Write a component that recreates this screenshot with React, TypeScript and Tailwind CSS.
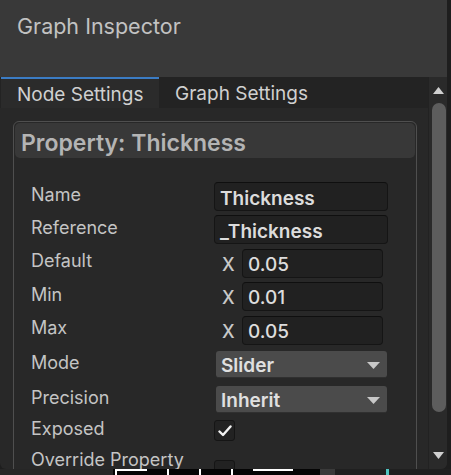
import React from "react";

const font = { fontFamily: "Inter, 'Noto Sans', sans-serif" };

function Label({ children }: { children: React.ReactNode }) {
  return (
    <div className="w-[199px] shrink-0 pl-[16px] pb-[4px] text-[18px] leading-none text-[#c4c4c4]">
      {children}
    </div>
  );
}

function TextField({ value }: { value: string }) {
  return (
    <div className="w-[174px] h-[29px] rounded-[4px] bg-[#212121] border border-[#151515] border-t-[#0f0f0f] flex items-center pl-[5px] pt-[3px] text-[19px] font-semibold leading-none text-[#dcdcdc]">
      {value}
    </div>
  );
}

function NumField({ value }: { value: string }) {
  return (
    <div className="flex items-center">
      <div className="w-[28px] pl-[8px] pt-[3px] text-[18px] font-medium leading-none text-[#c8c8c8]">X</div>
      <div className="w-[141px] h-[29px] rounded-[4px] bg-[#212121] border border-[#151515] border-t-[#0f0f0f] flex items-center pl-[5px] pt-[2px] text-[19px] font-medium leading-none text-[#dcdcdc]">
        {value}
      </div>
    </div>
  );
}

function Dropdown({ value }: { value: string }) {
  return (
    <div className="ml-[2px] w-[171px] h-[27px] rounded-[3px] bg-[#4b4b4b] border-b border-[#303030] flex items-center justify-between pl-[5px] pr-[7px] pt-[2px] text-[19px] font-semibold leading-none text-[#e0e0e0]">
      <span>{value}</span>
      <svg width="13" height="7" viewBox="0 0 13 7">
        <path d="M0 0 H13 L6.5 7 Z" fill="#c8c8c8" />
      </svg>
    </div>
  );
}

function Checkbox({ checked }: { checked?: boolean }) {
  return (
    <div className="w-[21px] h-[21px] rounded-[3px] bg-[#222222] border border-[#151515] flex items-center justify-center">
      {checked && (
        <svg width="14" height="12" viewBox="0 0 14 12">
          <path d="M1.5 6.5 L5 10 L12.5 1.5" stroke="#f2f2f2" strokeWidth="2.4" fill="none" strokeLinecap="round" strokeLinejoin="round" />
        </svg>
      )}
    </div>
  );
}

function Row({ h, label, children }: { h: string; label: string; children: React.ReactNode }) {
  return (
    <div className={`flex items-center ${h}`}>
      <Label>{label}</Label>
      {children}
    </div>
  );
}

export default function App() {
  return (
    <div className="w-[451px] h-[475px] bg-[#1e1e1e] overflow-hidden flex flex-col" style={font}>
      <div className="w-[447px] h-[469px] shrink-0 bg-[#282828] rounded-b-[6px] overflow-hidden flex flex-col">
        {/* header */}
        <div className="h-[77px] shrink-0 bg-[#393939] pl-[17px] pt-[16px] text-[21.5px] leading-none text-[#c2c2c2]">
          Graph Inspector
        </div>
        <div className="flex flex-1 min-h-0">
          {/* main column */}
          <div className="w-[428px] flex flex-col min-h-0">
            {/* tabs */}
            <div className="h-[31px] shrink-0 flex bg-[#232323]">
              <div className="ml-[1px] w-[158px] bg-[#2b2b2b] border-t-2 border-[#3b7cc4] pl-[16px] pt-[6px] text-[19px] leading-none text-[#d0d0d0]">
                Node Settings
              </div>
              <div className="pl-[16px] pt-[7px] text-[19px] leading-none text-[#d0d0d0]">Graph Settings</div>
            </div>
            {/* content */}
            <div className="flex-1 min-h-0 overflow-hidden pt-[13px] pl-[13px] pr-[11px]">
              <div className="border border-[#4f4f4f] rounded-[6px] p-[1px] h-[400px]">
                <div className="h-[35px] rounded-[5px] bg-[#383838] pl-[6px] pt-[9px] text-[23px] font-semibold leading-none text-[#b4b4b4]">
                  Property: Thickness
                </div>
                <div className="pt-[22px] flex flex-col">
                  <Row h="h-[33px]" label="Name"><TextField value="Thickness" /></Row>
                  <Row h="h-[33px]" label="Reference"><TextField value="_Thickness" /></Row>
                  <Row h="h-[34px]" label="Default"><NumField value="0.05" /></Row>
                  <Row h="h-[33px]" label="Min"><NumField value="0.01" /></Row>
                  <Row h="h-[34px]" label="Max"><NumField value="0.05" /></Row>
                  <Row h="h-[35px]" label="Mode"><Dropdown value="Slider" /></Row>
                  <Row h="h-[35px]" label="Precision"><Dropdown value="Inherit" /></Row>
                  <Row h="h-[27px]" label="Exposed"><Checkbox checked /></Row>
                  <div className="flex items-start h-[40px]">
                    <div className="w-[199px] shrink-0 pl-[16px] pt-[7px] text-[18px] leading-none text-[#c4c4c4] whitespace-nowrap">
                      Override Property
                    </div>
                    <div className="pt-[16px]"><Checkbox /></div>
                  </div>
                </div>
              </div>
            </div>
          </div>
          {/* scrollbar */}
          <div className="w-[19px] bg-[#2a2a2a] border-l border-[#222222] flex flex-col items-center">
            <div className="pt-[10px] pl-[1px]">
              <svg width="11" height="7" viewBox="0 0 11 7"><path d="M0 7 H11 L5.5 0 Z" fill="#d0d0d0" /></svg>
            </div>
            <div className="mt-[9px] ml-[1px] w-[14px] h-[309px] rounded-full bg-[#5d5d5d]" />
            <div className="mt-[40px] pl-[1px]">
              <svg width="11" height="7" viewBox="0 0 11 7"><path d="M0 0 H11 L5.5 7 Z" fill="#d0d0d0" /></svg>
            </div>
          </div>
        </div>
      </div>
      {/* background peeking below */}
      <div className="h-[6px] flex">
        <div className="w-[113px] bg-[#262626]" />
        <div className="w-[207px] bg-[#050505] flex">
          <div className="w-[2px] ml-[2px] bg-white" />
          <div className="w-[30px] h-[2px] bg-white" />
          <div className="w-[2px] ml-[20px] bg-white" />
          <div className="w-[2px] ml-[30px] bg-white" />
          <div className="w-[2px] ml-[30px] bg-white" />
          <div className="w-[40px] h-[2px] ml-[20px] bg-white" />
        </div>
        <div className="w-[15px] bg-[#3a3a3a]" />
        <div className="flex-1 bg-[#202020] flex">
          <div className="ml-[51px] w-[3px] bg-[#4fc3c0]" />
        </div>
      </div>
    </div>
  );
}
